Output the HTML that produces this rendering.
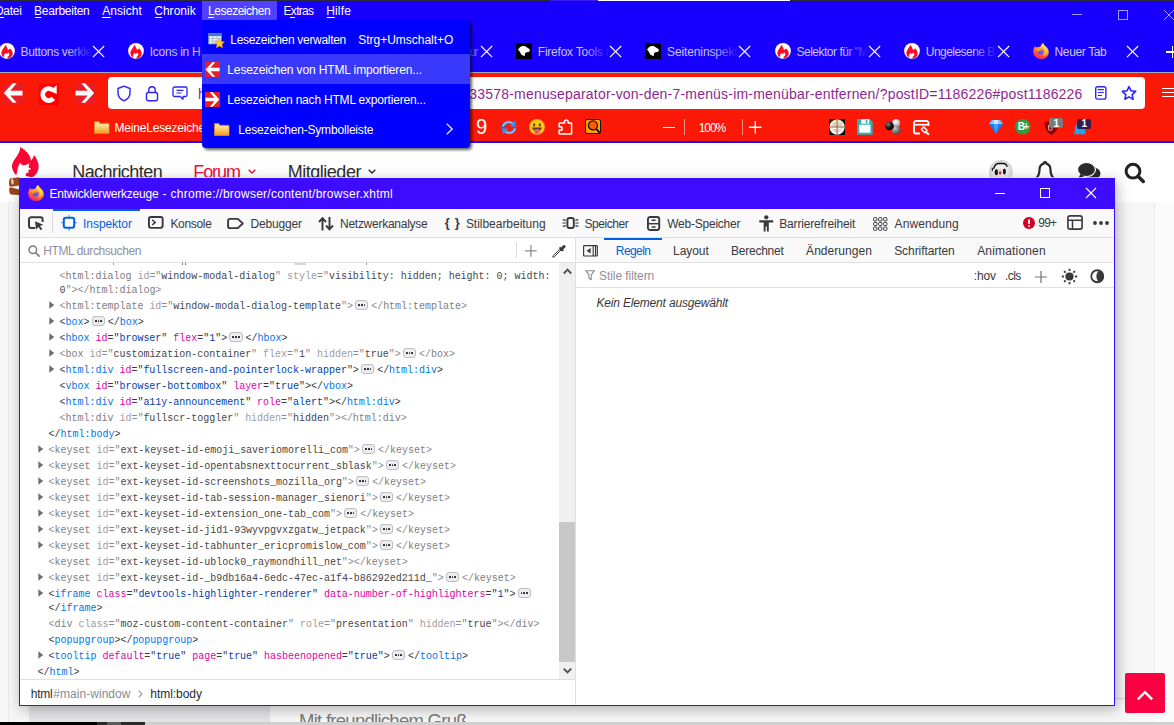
<!DOCTYPE html><html><head><meta charset="utf-8"><title>Entwicklerwerkzeuge</title><style>
html,body{margin:0;padding:0}body{width:1174px;height:725px;overflow:hidden;position:relative;background:#fff;font-family:"Liberation Sans", sans-serif;}
.L{position:absolute;left:0;top:0;width:1174px;height:725px;overflow:hidden}
.L div,.L span,.L svg{position:absolute}
.L span{white-space:pre;line-height:16px;font-size:12px}
.L svg{overflow:visible}
.L span.m{font-family:"Liberation Mono", monospace;font-size:10px;letter-spacing:-0.015px}
.L span.f{font-family:"Liberation Serif", serif}
</style></head><body>
<div class="L">
<div style="left:0px;top:143px;width:1174px;height:59px;background:#fff;"></div>
<div style="left:0px;top:202px;width:1174px;height:523px;background:#f6f6f6;"></div>
<div style="left:0px;top:202px;width:8px;height:523px;background:#f7f7f7;"></div>
<div style="left:8px;top:202px;width:1px;height:523px;background:#e9e9e9;"></div>
<div style="left:1155px;top:202px;width:19px;height:523px;background:#fbfbfb;"></div>
<div style="left:1154px;top:202px;width:1px;height:523px;background:#ececec;"></div>
<div style="left:29px;top:705px;width:240.5px;height:17px;background:#e4e4e7;"></div>
<div style="left:269.5px;top:705px;width:885.5px;height:17px;background:#f7f7f7;"></div>
<svg style="left:11.6px;top:146.7px;" width="27" height="31" viewBox="0 0 27 31"><path d="M8.300 0C11 1.500 15.500 5 17.400 8.700c.9 1.800 1.400 3.300 1.600 5 1.300-1.200 2.400-3.200 2.900-5.400 2.100 2 3.100 4.200 3.700 6.200.9 2.500 1.200 4.300 1 5.800-.3 2.700-1 4.500-1.800 5.700-1 1.500-2.200 2.700-3.300 3.400-2 .9-4 .6-5.800-.2L4.100 28.100C2.500 26.500 1.600 25.200.8 23 0 21-.2 19.800 0 18.600.5 16 1.500 14 2.900 12 4.500 9.500 6 7.500 7 5.400 7.800 3.500 8.300 1.800 8.300 0z" fill="#fa0535"/><path d="M3.800 31L5.400 22.800C6 20 7 17.500 7.900 15.700L10.300 18.200 14 18l3.400-1.700-.9 4 2.700 1.800-3.100 1.200.9 2.100-2.500.4L13 31z" fill="#fff"/></svg>
<svg style="left:8px;top:176px;" width="14" height="20" viewBox="0 0 14 20"><path d="M2 2.500L11 1.200V9.500L3 10.800C1.500 11 .8 9 1 7 1.200 4.500 1.500 2.800 2 2.500z" fill="#a04a1c"/><ellipse cx="4.400" cy="5.700" rx="1.200" ry="2.900" transform="rotate(-6 4.400 5.700)" fill="#f3ddd0"/><path d="M1.200 12.500c.3-.9 1.300-1.200 2.300-1L11 13.500V19L3 18.600C1.500 18 1 15 1.200 12.500z" fill="#9a4418"/></svg>
<span style="left:72.2px;top:164.36px;font-size:18px;color:#2f2f2f;letter-spacing:-0.555px;">Nachrichten</span>
<span style="left:193.3px;top:164.36px;font-size:18px;color:#e8103c;letter-spacing:-1.104px;">Forum</span>
<svg style="left:248px;top:168.5px;" width="8" height="5" viewBox="0 0 8 5"><path d="M.7.7L4 4 7.300.7" stroke="#e8103c" stroke-width="1.400" fill="none"/></svg>
<span style="left:287.8px;top:164.36px;font-size:18px;color:#2f2f2f;letter-spacing:-0.492px;">Mitglieder</span>
<svg style="left:368px;top:168.5px;" width="8" height="5" viewBox="0 0 8 5"><path d="M.7.7L4 4 7.300.7" stroke="#2f2f2f" stroke-width="1.400" fill="none"/></svg>
<svg style="left:989.2px;top:159.8px;" width="23.6" height="23.6" viewBox="0 0 23.6 23.6"><defs><radialGradient id="av" cx=".5" cy=".5" r=".5"><stop offset="0" stop-color="#fbfbfb"/><stop offset=".6" stop-color="#ececec"/><stop offset="1" stop-color="#cfcfcf"/></radialGradient></defs><circle cx="11.800" cy="11.800" r="11.800" fill="url(#av)"/><path d="M4.700 8.800C5.500 5.500 7.500 3.600 9.500 3.500h4.500c2.200.1 3.800 1.300 4.200 3.300" stroke="#111" stroke-width="1.300" fill="none"/><ellipse cx="3.400" cy="9.300" rx=".7" ry="1.900" fill="#222"/><ellipse cx="7.400" cy="12.300" rx="1.700" ry="3" fill="#151515"/><ellipse cx="15.400" cy="11.500" rx="1.500" ry="2.900" fill="#151515"/><ellipse cx="11.300" cy="11.300" rx="2.600" ry="2.900" fill="#eadbd2"/><ellipse cx="11.100" cy="13" rx="1.100" ry="1.800" fill="#b82030"/><rect x="8" y="16" width="7" height="7" fill="#efe6df" opacity=".8"/></svg>
<svg style="left:1034px;top:160px;" width="22" height="24" viewBox="0 0 22 24"><path d="M11 2.200a1.400 1.400 0 0 1 1.400 1.400c2.900.8 4.100 3.200 4.100 6.200 0 5 1.500 7 3.500 9v1.500H2V18.800c2-2 3.500-4 3.500-9 0-3 1.200-5.400 4.100-6.200A1.400 1.400 0 0 1 11 2.200z" stroke="#2b2b2b" stroke-width="2.200" fill="none"/></svg>
<svg style="left:1076px;top:161px;" width="26" height="22" viewBox="0 0 26 22"><ellipse cx="16.500" cy="12.500" rx="8" ry="6.300" fill="#2b2b2b"/><path d="M20 17l4 3.500-6.500-2z" fill="#2b2b2b"/><ellipse cx="10.500" cy="8.500" rx="9" ry="7" fill="#2b2b2b" stroke="#fff" stroke-width="1.200"/><path d="M4.500 13L2 18l6.500-3z" fill="#2b2b2b"/></svg>
<svg style="left:1121.5px;top:161.3px;" width="24" height="24" viewBox="0 0 24 24"><circle cx="11" cy="10.200" r="6.900" stroke="#222" stroke-width="3" fill="none"/><path d="M16 15.200l5.300 5.300" stroke="#222" stroke-width="3.400" stroke-linecap="round"/></svg>
<span style="left:299px;top:712.89px;font-size:18.5px;color:#7a7a7a;letter-spacing:-0.720px;">Mit freundlichem Gruß</span>
<div style="left:1125px;top:673px;width:40px;height:40px;background:#fa0040;border-radius:2px;"></div>
<svg style="left:1136px;top:689.5px;" width="18" height="10.5" viewBox="0 0 18 10.5"><path d="M1.800 9.300L9 2.100 16.200 9.300" stroke="#fff" stroke-width="2.400" fill="none"/></svg>
<div style="left:1115px;top:698px;width:10px;height:1px;background:#d6d6d6;"></div>
</div>
<div class="L">
<div style="left:0px;top:0px;width:1174px;height:72px;background:#1800ff;"></div>
<div style="left:0px;top:0px;width:1174px;height:1px;background:#2b2b38;"></div>
<div style="left:550px;top:0px;width:48px;height:1px;background:#3a1cf0;"></div>
<div style="left:598px;top:0px;width:192px;height:1px;background:#ffffff;"></div>
<div style="left:0px;top:72px;width:1174px;height:1px;background:#a9a4b4;"></div>
<div style="left:0px;top:73px;width:1174px;height:68px;background:#fc1806;"></div>
<div style="left:0px;top:141px;width:1174px;height:2px;background:#1800ff;"></div>
<div style="left:108px;top:77px;width:1037px;height:32px;background:#fff;border-radius:4px;"></div>
<span style="left:-5px;top:3.04px;font-size:12px;color:#fff;letter-spacing:-0.304px;">Datei</span>
<span style="left:34.1px;top:3.04px;font-size:12px;color:#fff;letter-spacing:-0.261px;">Bearbeiten</span>
<span style="left:102.2px;top:3.04px;font-size:12px;color:#fff;letter-spacing:0.057px;">Ansicht</span>
<span style="left:154.2px;top:3.04px;font-size:12px;color:#fff;letter-spacing:0.040px;">Chronik</span>
<span style="left:283.6px;top:3.04px;font-size:12px;color:#fff;letter-spacing:-0.723px;">Extras</span>
<span style="left:326.2px;top:3.04px;font-size:12px;color:#fff;letter-spacing:0.171px;">Hilfe</span>
<div style="left:-4px;top:17px;width:8px;height:1px;background:#fff;"></div>
<div style="left:34.5px;top:17px;width:6.5px;height:1px;background:#fff;"></div>
<div style="left:102px;top:17px;width:8.5px;height:1px;background:#fff;"></div>
<div style="left:154.5px;top:17px;width:7.5px;height:1px;background:#fff;"></div>
<div style="left:289.5px;top:17px;width:5.5px;height:1px;background:#fff;"></div>
<div style="left:326.5px;top:17px;width:8px;height:1px;background:#fff;"></div>
<div style="left:1072px;top:14px;width:10px;height:1px;background:#a79dff;"></div>
<div style="left:1118px;top:10px;width:10px;height:10px;background:transparent;border:1px solid #a79dff;box-sizing:border-box;"></div>
<svg style="left:1164px;top:10px;" width="10" height="10" viewBox="0 0 10 10"><path d="M0 0L10 10M10 0L0 10" stroke="#a79dff" stroke-width="1" fill="none"/></svg>
<svg style="left:-1.3px;top:43px;" width="16" height="16" viewBox="0 0 16 16"><circle cx="8" cy="7.900" r="7.900" fill="#fff"/><path d="M6.200 2C7.700 3.300 8.700 5 8.800 7c.9-.3 1.800-.9 2.500-1.500 1.800 1.800 2.700 4 2.300 6.100-.4 1.800-1.700 3-3.400 3.500l-1.400.3L4.800 14.500C3.100 13.200 2.200 11.400 2.400 9.500 2.700 6.600 5.500 5 6.200 2z" fill="#ff0a22"/><path d="M4.900 14.700c-.2-2 .5-3.800 2-4.600l.7.800 1-.5.400-1 1.200.7-.4 1 .8.600-.8.700.2.700-1.200.3-.5 2.100c-1.200.2-2.400-.1-3.400-.8z" fill="#fff"/></svg>
<span style="left:20.5px;top:44.04px;font-size:12px;color:#c9c3ff;letter-spacing:-0.334px;">Buttons verkle</span>
<div style="left:66.7px;top:42px;width:26px;height:20px;background:linear-gradient(to right,rgba(24,0,255,0),#1800ff);"></div>
<svg style="left:92.80000000000001px;top:46.199999999999996px;" width="11.2" height="11.2" viewBox="0 0 11.2 11.2"><path d="M0 0L11.2 11.2M11.2 0L0 11.2" stroke="#fff" stroke-width="1.15" fill="none"/></svg>
<svg style="left:128px;top:43px;" width="16" height="16" viewBox="0 0 16 16"><circle cx="8" cy="7.900" r="7.900" fill="#fff"/><path d="M6.200 2C7.700 3.300 8.700 5 8.800 7c.9-.3 1.800-.9 2.500-1.500 1.800 1.800 2.700 4 2.300 6.100-.4 1.800-1.700 3-3.400 3.500l-1.400.3L4.800 14.500C3.100 13.200 2.200 11.400 2.400 9.500 2.700 6.600 5.500 5 6.200 2z" fill="#ff0a22"/><path d="M4.900 14.700c-.2-2 .5-3.800 2-4.600l.7.800 1-.5.400-1 1.200.7-.4 1 .8.600-.8.700.2.700-1.200.3-.5 2.100c-1.200.2-2.400-.1-3.400-.8z" fill="#fff"/></svg>
<span style="left:149.8px;top:44.04px;font-size:12px;color:#c9c3ff;letter-spacing:-0.267px;">Icons in H</span>
<div style="left:196px;top:42px;width:26px;height:20px;background:linear-gradient(to right,rgba(24,0,255,0),#1800ff);"></div>
<svg style="left:222.1px;top:46.199999999999996px;" width="11.2" height="11.2" viewBox="0 0 11.2 11.2"><path d="M0 0L11.2 11.2M11.2 0L0 11.2" stroke="#fff" stroke-width="1.15" fill="none"/></svg>
<svg style="left:351.4px;top:46.199999999999996px;" width="11.2" height="11.2" viewBox="0 0 11.2 11.2"><path d="M0 0L11.2 11.2M11.2 0L0 11.2" stroke="#fff" stroke-width="1.15" fill="none"/></svg>
<svg style="left:480.79999999999995px;top:46.199999999999996px;" width="11.2" height="11.2" viewBox="0 0 11.2 11.2"><path d="M0 0L11.2 11.2M11.2 0L0 11.2" stroke="#fff" stroke-width="1.15" fill="none"/></svg>
<svg style="left:516px;top:43px;" width="16" height="16" viewBox="0 0 16 16"><rect width="16" height="16" fill="#000"/><path d="M2 6.600L3.900 4.300C5.400 3 7.500 2.700 9.500 3.500l3.500 2.200c.8.500 1 1.400.8 2.200l-1.200 1.100-2.100.2-1.500 1-.2 2.800-1.300-.2-2.300-1.300L4 9z" fill="#fff"/></svg>
<span style="left:537.8px;top:44.04px;font-size:12px;color:#c9c3ff;letter-spacing:-0.227px;">Firefox Tools f</span>
<div style="left:584px;top:42px;width:26px;height:20px;background:linear-gradient(to right,rgba(24,0,255,0),#1800ff);"></div>
<svg style="left:610.1px;top:46.199999999999996px;" width="11.2" height="11.2" viewBox="0 0 11.2 11.2"><path d="M0 0L11.2 11.2M11.2 0L0 11.2" stroke="#fff" stroke-width="1.15" fill="none"/></svg>
<svg style="left:645.3px;top:43px;" width="16" height="16" viewBox="0 0 16 16"><rect width="16" height="16" fill="#000"/><path d="M2 6.600L3.900 4.300C5.400 3 7.500 2.700 9.500 3.500l3.500 2.200c.8.500 1 1.400.8 2.200l-1.200 1.100-2.100.2-1.500 1-.2 2.800-1.300-.2-2.300-1.300L4 9z" fill="#fff"/></svg>
<span style="left:667.0999999999999px;top:44.04px;font-size:12px;color:#c9c3ff;letter-spacing:-0.129px;">Seiteninspekt</span>
<div style="left:713.3px;top:42px;width:26px;height:20px;background:linear-gradient(to right,rgba(24,0,255,0),#1800ff);"></div>
<svg style="left:739.4px;top:46.199999999999996px;" width="11.2" height="11.2" viewBox="0 0 11.2 11.2"><path d="M0 0L11.2 11.2M11.2 0L0 11.2" stroke="#fff" stroke-width="1.15" fill="none"/></svg>
<svg style="left:774.7px;top:43px;" width="16" height="16" viewBox="0 0 16 16"><circle cx="8" cy="7.900" r="7.900" fill="#fff"/><path d="M6.200 2C7.700 3.300 8.700 5 8.800 7c.9-.3 1.800-.9 2.500-1.500 1.800 1.800 2.700 4 2.300 6.100-.4 1.800-1.700 3-3.400 3.500l-1.400.3L4.800 14.500C3.100 13.200 2.200 11.400 2.400 9.500 2.700 6.600 5.500 5 6.200 2z" fill="#ff0a22"/><path d="M4.900 14.700c-.2-2 .5-3.800 2-4.600l.7.800 1-.5.400-1 1.200.7-.4 1 .8.600-.8.700.2.700-1.200.3-.5 2.100c-1.200.2-2.400-.1-3.400-.8z" fill="#fff"/></svg>
<span style="left:796.5px;top:44.04px;font-size:12px;color:#c9c3ff;letter-spacing:-0.497px;">Selektor für "M</span>
<div style="left:842.7px;top:42px;width:26px;height:20px;background:linear-gradient(to right,rgba(24,0,255,0),#1800ff);"></div>
<svg style="left:868.8000000000001px;top:46.199999999999996px;" width="11.2" height="11.2" viewBox="0 0 11.2 11.2"><path d="M0 0L11.2 11.2M11.2 0L0 11.2" stroke="#fff" stroke-width="1.15" fill="none"/></svg>
<svg style="left:904px;top:43px;" width="16" height="16" viewBox="0 0 16 16"><circle cx="8" cy="7.900" r="7.900" fill="#fff"/><path d="M6.200 2C7.700 3.300 8.700 5 8.800 7c.9-.3 1.800-.9 2.500-1.500 1.800 1.800 2.700 4 2.300 6.100-.4 1.800-1.700 3-3.400 3.500l-1.400.3L4.800 14.500C3.100 13.200 2.200 11.400 2.400 9.500 2.700 6.600 5.500 5 6.200 2z" fill="#ff0a22"/><path d="M4.900 14.700c-.2-2 .5-3.800 2-4.600l.7.800 1-.5.400-1 1.200.7-.4 1 .8.600-.8.700.2.700-1.200.3-.5 2.100c-1.200.2-2.400-.1-3.400-.8z" fill="#fff"/></svg>
<span style="left:925.8px;top:44.04px;font-size:12px;color:#c9c3ff;letter-spacing:-0.536px;">Ungelesene B</span>
<div style="left:972px;top:42px;width:26px;height:20px;background:linear-gradient(to right,rgba(24,0,255,0),#1800ff);"></div>
<svg style="left:998.1px;top:46.199999999999996px;" width="11.2" height="11.2" viewBox="0 0 11.2 11.2"><path d="M0 0L11.2 11.2M11.2 0L0 11.2" stroke="#fff" stroke-width="1.15" fill="none"/></svg>
<svg style="left:1033.3px;top:43px;" width="16" height="16" viewBox="0 0 16 16"><defs><linearGradient id="fxg" x1=".75" y1=".05" x2=".3" y2="1"><stop offset="0" stop-color="#fff44f"/><stop offset=".3" stop-color="#ffb92e"/><stop offset=".6" stop-color="#ff6b2b"/><stop offset=".85" stop-color="#ff3647"/><stop offset="1" stop-color="#f0207a"/></linearGradient><radialGradient id="fxgb" cx=".4" cy=".6" r=".7"><stop offset="0" stop-color="#4f5ae8"/><stop offset="1" stop-color="#9a4dff"/></radialGradient></defs><path d="M8 16C3.600 16 .2 12.700.2 8.500c0-1.900.7-3.800 1.900-5.100l.4-.5c.1.700.4 1.300.8 1.700.7-.6 1.900-.8 2.900-.6.600-.1 1.300-.4 1.700-1C8.100 1.700 9.100.6 10.200 0c.3 1.200 1.300 2.200 2.400 3.200 1.900 1.600 3.200 3.600 3.200 6 0 3.800-3.300 6.800-7.800 6.800z" fill="url(#fxg)"/><circle cx="7.500" cy="8.800" r="3" fill="url(#fxgb)"/><path d="M2.300 5.400c1.400-.6 3.400-.4 4.400.4l3 .4c-.6 1-1.600 1.500-2.600 1.500s-1.600.5-2.100 1.300c-.5-1.600-1.500-2.700-2.700-3.600z" fill="#ff9a1f"/><path d="M9.600 3.700c1.400 1.300 2.300 3.100 2.300 5.300 0 1.700-.8 3.200-2 4.200 2.600-.6 4.400-2.600 4.400-5.200 0-1.900-1-3.500-2.400-4.700-.8-.7-1.500-1.400-1.800-2.200-.5.700-.7 1.600-.5 2.600z" fill="#ffdf45" opacity=".75"/></svg>
<span style="left:1054.5px;top:44.04px;font-size:12px;color:#cdc8ff;letter-spacing:-0.357px;">Neuer Tab</span>
<svg style="left:1127.4px;top:46.199999999999996px;" width="11.2" height="11.2" viewBox="0 0 11.2 11.2"><path d="M0 0L11.2 11.2M11.2 0L0 11.2" stroke="#fff" stroke-width="1.15" fill="none"/></svg>
<div style="left:1171.7px;top:45.8px;width:1.2px;height:12.4px;background:#fff;"></div>
<div style="left:1166.3px;top:51.4px;width:12px;height:1.2px;background:#fff;"></div>
<span style="left:469.5px;top:44.04px;font-size:12px;color:#6a5cff;letter-spacing:-1.772px;">ur</span>
<div style="left:3px;top:83px;width:20px;height:20px;background:#e81d26;"></div>
<svg style="left:3px;top:83px;" width="20" height="20" viewBox="0 0 20 20"><path d="M.8 10L9.800.3h3.900L7.300 7.700H19.500v4.700H7.300l6.400 7.300H9.800z" fill="#fff"/></svg>
<div style="left:39px;top:84px;width:20px;height:20.5px;background:#fe0000;"></div>
<svg style="left:39px;top:84px;" width="20" height="20.5" viewBox="0 0 20 20.5"><path d="M13.400 5.900A5.950 5.950 0 1 0 14.300 14.400" stroke="#fff" stroke-width="4.800" fill="none"/><path d="M17.700 1L17.700 9.900 11 7z" fill="#fff"/></svg>
<div style="left:75px;top:83px;width:20px;height:20px;background:#e81d26;"></div>
<svg style="left:75px;top:83px;" width="20" height="20" viewBox="0 0 20 20"><path d="M19.200 10L10.200.3H6.300l6.400 7.400H.5v4.700h12.200l-6.400 7.300h3.900z" fill="#fff"/></svg>
<svg style="left:116.2px;top:84.7px;" width="16" height="17" viewBox="0 0 16 17"><path d="M8 1.200L14 3.500V8c0 3.600-2.500 6.300-6 7.800C4.500 14.300 2 11.600 2 8V3.500z" stroke="#2a22ff" stroke-width="1.400" fill="none" stroke-linejoin="round"/></svg>
<svg style="left:145.2px;top:84.5px;" width="14" height="17" viewBox="0 0 14 17"><rect x="1.500" y="7.500" width="11" height="8.300" rx="1.800" stroke="#2a22ff" stroke-width="1.400" fill="none"/><path d="M3.800 7.500V5a3.200 3.200 0 0 1 6.400 0v2.500" stroke="#2a22ff" stroke-width="1.400" fill="none"/></svg>
<svg style="left:172px;top:86px;" width="16" height="14" viewBox="0 0 16 14"><path d="M2.500 1h11a1.500 1.500 0 0 1 1.500 1.500v6.500a1.500 1.500 0 0 1-1.500 1.500h-2.500v2.800l-3-2.800h-5.500a1.500 1.500 0 0 1-1.500-1.500v-6.500a1.500 1.500 0 0 1 1.500-1.500z" stroke="#2a22ff" stroke-width="1.300" fill="none" stroke-linejoin="round"/><path d="M4.500 4.300h7M4.500 7h5" stroke="#2a22ff" stroke-width="1.200"/></svg>
<span style="left:198px;top:86.15px;font-size:14px;color:#8e2890;">h</span>
<span style="left:469.3px;top:86.15px;font-size:14px;color:#8e2890;letter-spacing:0.196px;">33578-menuseparator-von-den-7-menüs-im-menübar-entfernen/?postID=1186226#post1186226</span>
<svg style="left:1095.3px;top:86px;" width="12" height="14" viewBox="0 0 12 14"><rect x=".7" y=".7" width="10.200" height="12.400" rx="1.900" stroke="#2a22ff" stroke-width="1.400" fill="none"/><path d="M3.200 3.700h5.200M3.200 6.500h5.200M3.200 9.500h3.300" stroke="#2a22ff" stroke-width="1.200" stroke-linecap="round"/></svg>
<svg style="left:1121px;top:85.3px;" width="16" height="16" viewBox="0 0 16 16"><path d="M8 1.500l2 4.300 4.700.6-3.500 3.200.9 4.600L8 11.900l-4.100 2.300.9-4.600L1.300 6.400 6 5.800z" stroke="#2a22ff" stroke-width="1.600" fill="none" stroke-linejoin="round"/></svg>
<div style="left:1162px;top:87.8px;width:14px;height:1.2px;background:#fff;"></div>
<div style="left:1162px;top:91.9px;width:14px;height:1.2px;background:#fff;"></div>
<div style="left:1162px;top:96px;width:14px;height:1.2px;background:#fff;"></div>
<svg style="left:94.3px;top:121px;" width="15.5" height="13" viewBox="0 0 15.5 13"><defs><linearGradient id="fg1" x1="0" y1="0" x2="0" y2="1"><stop offset="0" stop-color="#ffe29a"/><stop offset="1" stop-color="#f59c1d"/></linearGradient></defs><path d="M.5.500h4.300l1 1.800h9.200v10.200h-14.500z" fill="#ffd98a" stroke="#c9801c" stroke-width=".9"/><rect x=".9" y="3.600" width="13.700" height="8.500" fill="url(#fg1)"/></svg>
<span style="left:114.5px;top:119.54px;font-size:12px;color:#fff;letter-spacing:-0.200px;">MeineLesezeiche</span>
<span style="left:475.5px;top:118.55px;font-size:21.5px;color:#fff;transform:scaleX(.94);transform-origin:0 0;">9</span>
<svg style="left:501px;top:119.5px;" width="16" height="15" viewBox="0 0 16 15"><path d="M.6 7.200C.8 3.400 4 .8 7.800.8c1.800 0 3.300.6 4.500 1.600L14.200.6l.8 6.300-6.300-.6 1.900-1.800C9.800 4 8.900 3.700 7.800 3.700c-2.200 0-3.700 1.300-4.200 3.100z" fill="#2f8ff2"/><path d="M15.400 7.800c-.2 3.800-3.400 6.400-7.200 6.400-1.800 0-3.300-.6-4.500-1.600L1.800 14.400 1 8.100l6.300.6-1.900 1.800c.8.500 1.700.8 2.800.8 2.200 0 3.700-1.300 4.200-3.100z" fill="#2f8ff2"/><path d="M2 6.300C2.800 3.600 5.200 2 7.800 2c1.500 0 2.900.5 3.900 1.400" stroke="#a9d8ff" stroke-width="1.100" fill="none"/><path d="M14 8.700c-.8 2.700-3.200 4.300-5.800 4.300-1.500 0-2.900-.5-3.900-1.400" stroke="#a9d8ff" stroke-width="1.100" fill="none"/></svg>
<svg style="left:529px;top:119px;" width="16" height="16" viewBox="0 0 16 16"><circle cx="8" cy="8" r="7.900" fill="#fcc21b"/><ellipse cx="5.200" cy="5.900" rx="1.100" ry="1.600" fill="#5a4425"/><ellipse cx="10.800" cy="5.900" rx="1.100" ry="1.600" fill="#5a4425"/><path d="M3.200 8.600h9.600c-.2 2.300-2.100 3.900-4.800 3.900s-4.600-1.600-4.800-3.900z" fill="#5a3a20"/><path d="M5.700 10h4.600v3.200a2.300 2.300 0 0 1-4.600 0z" fill="#f0527a"/></svg>
<svg style="left:558.3px;top:119.2px;" width="14.5" height="16" viewBox="0 0 14.5 16"><path d="M6.500 3.900V2.700a1.800 1.800 0 0 1 3.600 0v1.200h2.700a.8.800 0 0 1 .8.800v9.500a.8.800 0 0 1-.8.800H1.900a.8.800 0 0 1-.8-.8v-2.900h1.300a1.800 1.800 0 0 0 0-3.600H1.100V4.700a.8.800 0 0 1 .8-.8z" stroke="#fff" stroke-width="1.500" fill="none" stroke-linejoin="round"/></svg>
<div style="left:585.3px;top:119.4px;width:15.4px;height:15px;background:#ffa200;border:1.300px solid #1a1200;border-radius:2px;box-sizing:border-box;"></div>
<svg style="left:585.3px;top:119.4px;" width="15.4" height="15" viewBox="0 0 15.4 15"><circle cx="7.900" cy="6.400" r="4.500" fill="#ff5a00" stroke="#1a1200" stroke-width="1.300"/><path d="M11.200 9.800l3.800 4.300" stroke="#1a1200" stroke-width="1.900"/></svg>
<div style="left:663px;top:127px;width:12px;height:1.2px;background:#fff;"></div>
<div style="left:683.5px;top:119px;width:1px;height:16px;background:#ff8f84;"></div>
<span style="left:698.8px;top:119.54px;font-size:12px;color:#fff;letter-spacing:-1.101px;">100%</span>
<div style="left:741.5px;top:119px;width:1px;height:16px;background:#ff8f84;"></div>
<svg style="left:749px;top:121.3px;" width="12.5" height="12.5" viewBox="0 0 12.5 12.5"><path d="M6.250 0V12.500M0 6.250H12.500" stroke="#fff" stroke-width="1.300" fill="none"/></svg>
<div style="left:829px;top:119px;width:16.2px;height:16px;background:#000;"></div>
<svg style="left:829px;top:119px;" width="16.2" height="16" viewBox="0 0 16.2 16"><defs><linearGradient id="chg" x1="0" y1="0" x2="0" y2="1"><stop offset="0" stop-color="#d9de8c"/><stop offset=".3" stop-color="#f3efdf"/><stop offset="1" stop-color="#f8f2ef"/></linearGradient></defs><circle cx="8.100" cy="8" r="7.700" fill="url(#chg)"/><path d="M8.100 .5V15.500M.5 8H15.700" stroke="#7a2a1a" stroke-width=".7" fill="none"/><path d="M3.500 4.800h9.200M3.500 6.400h9.200M4 11h8.200M6 12.800h4.200" stroke="#a08070" stroke-width=".5" fill="none"/></svg>
<svg style="left:857.2px;top:119.2px;" width="15.7" height="15.7" viewBox="0 0 15.7 15.7"><path d="M0 0h12.700l3 3V15.700H0z" fill="#2cb1b4"/><rect x="2.300" y="5.700" width="11.100" height="8" fill="#fff"/><rect x="4.300" y=".3" width="8" height="4.300" fill="#fff"/><rect x="8.800" y="1" width="1.600" height="3" fill="#2cb1b4"/></svg>
<svg style="left:885px;top:119px;" width="17" height="16.5" viewBox="0 0 17 16.5"><defs><radialGradient id="b1" cx=".35" cy=".3" r=".7"><stop offset="0" stop-color="#888"/><stop offset=".5" stop-color="#222"/><stop offset="1" stop-color="#000"/></radialGradient><radialGradient id="b2" cx=".4" cy=".35" r=".7"><stop offset="0" stop-color="#fff"/><stop offset="1" stop-color="#a5a5a5"/></radialGradient><radialGradient id="b3" cx=".35" cy=".3" r=".7"><stop offset="0" stop-color="#c8c8c8"/><stop offset="1" stop-color="#4a4a4a"/></radialGradient></defs><circle cx="11.100" cy="4" r="3.900" fill="url(#b2)"/><circle cx="11.200" cy="11" r="4.600" fill="url(#b3)"/><circle cx="4.500" cy="7" r="4.300" fill="url(#b1)"/></svg>
<svg style="left:912.5px;top:119.5px;" width="17.5" height="16" viewBox="0 0 17.5 16"><path d="M15.500 6V3a2 2 0 0 0-2-2H3a2 2 0 0 0-2 2v8.500a2 2 0 0 0 2 2h4" stroke="#fff" stroke-width="1.900" fill="none"/><path d="M1 4.700h14.500" stroke="#fff" stroke-width="1.700"/><path d="M8.300 9.300l2.400-2.400 3.400 3.400-2.400 2.400z" stroke="#fff" stroke-width="1.500" fill="none" stroke-linejoin="round"/><path d="M13 12l3 2.800" stroke="#fff" stroke-width="2.200"/></svg>
<svg style="left:988.5px;top:120px;" width="14" height="14" viewBox="0 0 14 14"><path d="M3 0h8l3 4-7 10L0 4z" fill="#1e78e6"/><path d="M3 0h8l3 4H0z" fill="#7cc4ff"/><path d="M4.500 4h5L7 14z" fill="#3da0ff"/><path d="M5 0h4l.5 4h-5z" fill="#c8e8ff"/></svg>
<svg style="left:1015.3px;top:119.3px;" width="15.5" height="15.5" viewBox="0 0 15.5 15.5"><circle cx="7.750" cy="7.750" r="7.750" fill="#2e9e44"/></svg>
<span style="left:1017.8px;top:119.13px;font-size:10px;color:#fff;letter-spacing:-1.862px;font-weight:700;">B+</span>
<svg style="left:1044px;top:120px;" width="15" height="15" viewBox="0 0 15 15"><path d="M7.500 0C9.500 1.300 12 2 14.500 2c0 6-2 10.500-7 13C2.500 12.500.5 8 .5 2 3 2 5.500 1.300 7.500 0z" fill="#8a0606"/><path d="M4.500 5v3.500a1.800 1.800 0 0 0 3.600 0V5" stroke="#d8a0a0" stroke-width="1.100" fill="none"/></svg>
<div style="left:1049px;top:118.2px;width:13.9px;height:10px;background:#7a7a7a;border-radius:2px;"></div>
<span style="left:1053.5px;top:115.73px;font-size:10px;color:#fff;font-weight:700;">1</span>
<svg style="left:1073px;top:120.5px;" width="14" height="14" viewBox="0 0 14 14"><path d="M1 14c.5-2 1-4 1-7a5 5 0 0 1 10 0c0 3 .5 5 1 7l-2.200-1.500L9.500 14 7 12.500 4.500 14 3.200 12.500z" fill="#1ea5f2"/></svg>
<div style="left:1076.8px;top:118.5px;width:14.1px;height:10px;background:#3a1a4d;border-radius:2px;"></div>
<span style="left:1081.5px;top:115.83px;font-size:10px;color:#fff;font-weight:700;">1</span>
</div>
<div class="L">
<div style="left:19px;top:178px;width:1096px;height:528px;background:#fff;box-shadow:2px 3px 13px rgba(0,0,0,.3);"></div>
<div style="left:19px;top:177px;width:1096px;height:1px;background:#ebebda;opacity:.7;"></div>
<div style="left:19px;top:178px;width:1096px;height:31px;background:#3d0cff;"></div>
<div style="left:19px;top:209px;width:1px;height:497px;background:#3d0cff;"></div>
<div style="left:1114px;top:209px;width:1px;height:497px;background:#3d0cff;"></div>
<div style="left:19px;top:705px;width:1096px;height:1px;background:#3d0cff;"></div>
<div style="left:20px;top:209px;width:1094px;height:28px;background:#f9f9fa;"></div>
<div style="left:576px;top:238px;width:538px;height:24px;background:#f9f9fa;"></div>
<div style="left:20px;top:237px;width:1094px;height:1px;background:#e0e0e2;"></div>
<div style="left:20px;top:262px;width:1094px;height:1px;background:#e0e0e2;"></div>
<div style="left:575px;top:238px;width:1px;height:467px;background:#e0e0e2;"></div>
<div style="left:576px;top:287px;width:538px;height:1px;background:#e0e0e2;"></div>
<div style="left:20px;top:679px;width:555px;height:1px;background:#e0e0e2;"></div>
<div style="left:559px;top:263px;width:16px;height:416px;background:#f0f0f0;"></div>
<div style="left:559px;top:521.7px;width:16px;height:140px;background:#c8c8c8;"></div>
<svg style="left:28px;top:185px;" width="16" height="16" viewBox="0 0 16 16"><defs><linearGradient id="fyg" x1=".75" y1=".05" x2=".3" y2="1"><stop offset="0" stop-color="#fff44f"/><stop offset=".3" stop-color="#ffb92e"/><stop offset=".6" stop-color="#ff6b2b"/><stop offset=".85" stop-color="#ff3647"/><stop offset="1" stop-color="#f0207a"/></linearGradient><radialGradient id="fygb" cx=".4" cy=".6" r=".7"><stop offset="0" stop-color="#4f5ae8"/><stop offset="1" stop-color="#9a4dff"/></radialGradient></defs><path d="M8 16C3.600 16 .2 12.700.2 8.500c0-1.900.7-3.800 1.900-5.100l.4-.5c.1.700.4 1.300.8 1.700.7-.6 1.900-.8 2.900-.6.600-.1 1.300-.4 1.700-1C8.100 1.700 9.100.6 10.200 0c.3 1.200 1.300 2.200 2.400 3.200 1.900 1.600 3.200 3.600 3.200 6 0 3.800-3.300 6.800-7.800 6.800z" fill="url(#fyg)"/><circle cx="7.500" cy="8.800" r="3" fill="url(#fygb)"/><path d="M2.300 5.400c1.400-.6 3.400-.4 4.400.4l3 .4c-.6 1-1.600 1.500-2.600 1.500s-1.600.5-2.100 1.300c-.5-1.600-1.500-2.700-2.700-3.600z" fill="#ff9a1f"/><path d="M9.600 3.700c1.400 1.300 2.300 3.100 2.300 5.300 0 1.700-.8 3.200-2 4.200 2.600-.6 4.400-2.600 4.400-5.200 0-1.900-1-3.500-2.400-4.700-.8-.7-1.500-1.400-1.800-2.200-.5.700-.7 1.600-.5 2.600z" fill="#ffdf45" opacity=".75"/></svg>
<span style="left:49.4px;top:185.84px;font-size:12px;color:#fff;letter-spacing:-0.190px;">Entwicklerwerkzeuge</span>
<span style="left:162.4px;top:185.84px;font-size:12px;color:#fff;">-</span>
<span style="left:170.6px;top:185.84px;font-size:12px;color:#fff;letter-spacing:0.255px;">chrome://browser/content/browser.xhtml</span>
<div style="left:995.4px;top:193px;width:9.8px;height:1px;background:#fff;"></div>
<div style="left:1040.4px;top:188.4px;width:9.6px;height:9.6px;background:transparent;border:1px solid #fff;box-sizing:border-box;"></div>
<svg style="left:1086px;top:187.8px;" width="10" height="10" viewBox="0 0 10 10"><path d="M0 0L10 10M10 0L0 10" stroke="#fff" stroke-width="1.100" fill="none"/></svg>
<svg style="left:27px;top:215px;" width="18" height="16" viewBox="0 0 18 16"><path d="M8.300 13H4a2 2 0 0 1-2-2V4.300a2 2 0 0 1 2-2h9.600a2 2 0 0 1 2 2V7" stroke="#38383d" stroke-width="2" fill="none"/><path d="M8 6.200l8.200 3.500-3.300 1.300 2.400 3-1.500 1.200-2.400-3.100-2.300 2.400z" fill="#38383d"/></svg>
<div style="left:52px;top:213px;width:1px;height:20px;background:#dcdcdf;"></div>
<div style="left:53px;top:209px;width:87px;height:2px;background:#0060df;"></div>
<svg style="left:61px;top:215px;" width="16" height="16" viewBox="0 0 16 16"><rect x="2.800" y="2.700" width="10.400" height="10" rx="2" stroke="#0060df" stroke-width="2" fill="none"/><path d="M8 .3v1.500M8 13.700v1.700M.3 7.700h1.500M14.200 7.700h1.500" stroke="#0060df" stroke-width="1.300" opacity=".75"/></svg>
<span style="left:83.1px;top:216.24px;font-size:12px;color:#0060df;letter-spacing:-0.070px;">Inspektor</span>
<svg style="left:147.1px;top:215.3px;" width="17.6" height="14.8" viewBox="0 0 17.6 14.8"><rect x="1.950" y="1.950" width="13.700" height="10.900" rx="2" stroke="#38383d" stroke-width="1.900" fill="none"/><path d="M5.200 4.800l3 2.600-3 2.600" stroke="#38383d" stroke-width="1.500" fill="none"/></svg>
<span style="left:170.4px;top:216.24px;font-size:12px;color:#38383d;letter-spacing:-0.312px;">Konsole</span>
<svg style="left:227.3px;top:216.8px;" width="17.5" height="13" viewBox="0 0 17.5 13"><path d="M3 1.900h7.800l5 4.600-5 4.600H3a1.900 1.900 0 0 1-1.900-1.900V3.800A1.900 1.900 0 0 1 3 1.900z" stroke="#38383d" stroke-width="1.900" fill="none" stroke-linejoin="round"/></svg>
<span style="left:250.4px;top:216.24px;font-size:12px;color:#38383d;letter-spacing:-0.174px;">Debugger</span>
<svg style="left:317.5px;top:215.5px;" width="16" height="15.5" viewBox="0 0 16 15.5"><path d="M4.500 14.500V2.500M1 6L4.500 2.200 8 6M11.500 1v12M8 9.500l3.500 3.800L15 9.500" stroke="#38383d" stroke-width="1.900" fill="none"/></svg>
<span style="left:340px;top:216.24px;font-size:12px;color:#38383d;letter-spacing:-0.263px;">Netzwerkanalyse</span>
<span style="left:444.7px;top:215.10px;font-size:13px;color:#38383d;letter-spacing:4.975px;font-weight:700;">{}</span>
<span style="left:465.9px;top:216.24px;font-size:12px;color:#38383d;letter-spacing:-0.026px;">Stilbearbeitung</span>
<svg style="left:561.5px;top:216px;" width="17" height="14.5" viewBox="0 0 17 14.5"><rect x="5.400" y="1.950" width="6.400" height="10.100" rx="2" stroke="#38383d" stroke-width="1.900" fill="none"/><path d="M.8 3.600l3 .8M.5 7h3.300M.8 10.400l3-.8M16.400 3.600l-3 .8M16.700 7h-3.300M16.400 10.400l-3-.8" stroke="#38383d" stroke-width="1.200" fill="none"/></svg>
<span style="left:584.4px;top:216.24px;font-size:12px;color:#38383d;letter-spacing:-0.439px;">Speicher</span>
<svg style="left:645.5px;top:214.5px;" width="15.2" height="17" viewBox="0 0 15.2 17"><rect x="1.950" y="1.950" width="11.300" height="13" rx="2.200" stroke="#38383d" stroke-width="1.900" fill="none"/><path d="M2 8.700h11.200" stroke="#38383d" stroke-width="1.500"/><path d="M5.600 5.300h4M5.600 12h4" stroke="#38383d" stroke-width="1.400"/></svg>
<span style="left:667.2px;top:216.24px;font-size:12px;color:#38383d;letter-spacing:-0.230px;">Web-Speicher</span>
<svg style="left:758.5px;top:214.8px;" width="14.5" height="17" viewBox="0 0 14.5 17"><circle cx="7.250" cy="2.300" r="2.150" fill="#38383d"/><path d="M.3 5.300h13.900v2.100H9.800V16.500H7.900V11.400H6.600V16.500H4.700V7.400H.3z" fill="#38383d"/></svg>
<span style="left:779.3px;top:216.24px;font-size:12px;color:#38383d;letter-spacing:-0.180px;">Barrierefreiheit</span>
<svg style="left:873px;top:216.5px;" width="14.5" height="14" viewBox="0 0 14.5 14"><rect x="0.6" y="0.6" width="3.300" height="3.300" rx=".9" stroke="#38383d" stroke-width="1" fill="none"/><rect x="0.6" y="5.3" width="3.300" height="3.300" rx=".9" stroke="#38383d" stroke-width="1" fill="none"/><rect x="0.6" y="10.0" width="3.300" height="3.300" rx=".9" stroke="#38383d" stroke-width="1" fill="none"/><rect x="5.6" y="0.6" width="3.300" height="3.300" rx=".9" stroke="#38383d" stroke-width="1" fill="none"/><rect x="5.6" y="5.3" width="3.300" height="3.300" rx=".9" stroke="#38383d" stroke-width="1" fill="none"/><rect x="5.6" y="10.0" width="3.300" height="3.300" rx=".9" stroke="#38383d" stroke-width="1" fill="none"/><rect x="10.6" y="0.6" width="3.300" height="3.300" rx=".9" stroke="#38383d" stroke-width="1" fill="none"/><rect x="10.6" y="5.3" width="3.300" height="3.300" rx=".9" stroke="#38383d" stroke-width="1" fill="none"/><rect x="10.6" y="10.0" width="3.300" height="3.300" rx=".9" stroke="#38383d" stroke-width="1" fill="none"/></svg>
<span style="left:894.6px;top:216.24px;font-size:12px;color:#38383d;letter-spacing:0.076px;">Anwendung</span>
<svg style="left:1022.8px;top:217px;" width="12" height="12" viewBox="0 0 12 12"><circle cx="6" cy="6" r="6" fill="#d70022"/><rect x="5.100" y="2.300" width="1.800" height="4.800" rx=".6" fill="#fff"/><circle cx="6" cy="9" r="1" fill="#fff"/></svg>
<span style="left:1038.3px;top:215.04px;font-size:12px;color:#38383d;letter-spacing:-0.830px;">99+</span>
<svg style="left:1066.8px;top:215.3px;" width="16" height="15" viewBox="0 0 16 15"><rect x=".9" y=".9" width="14.200" height="13.200" rx="2.200" stroke="#38383d" stroke-width="1.600" fill="none"/><path d="M.9 5.200h14.200M5.500 5.200v9" stroke="#38383d" stroke-width="1.500"/></svg>
<svg style="left:1093.2px;top:221.3px;" width="4" height="4" viewBox="0 0 4 4"><circle cx="2" cy="2" r="1.900" fill="#38383d"/></svg>
<svg style="left:1099px;top:221.3px;" width="4" height="4" viewBox="0 0 4 4"><circle cx="2" cy="2" r="1.900" fill="#38383d"/></svg>
<svg style="left:1104.8px;top:221.3px;" width="4" height="4" viewBox="0 0 4 4"><circle cx="2" cy="2" r="1.900" fill="#38383d"/></svg>
<svg style="left:28px;top:244.5px;" width="13" height="12" viewBox="0 0 13 12"><circle cx="4.800" cy="4.800" r="3.800" stroke="#7d7d84" stroke-width="1.500" fill="none"/><path d="M7.600 7.600l4 4" stroke="#7d7d84" stroke-width="1.700"/></svg>
<span style="left:43.3px;top:243.44px;font-size:12px;color:#8f8f9d;letter-spacing:-0.412px;">HTML durchsuchen</span>
<div style="left:515.5px;top:242px;width:1px;height:15.5px;background:#dcdcdf;"></div>
<svg style="left:525px;top:245.2px;" width="11.8" height="11.8" viewBox="0 0 11.8 11.8"><path d="M5.900 0V11.800M0 5.900H11.800" stroke="#8a8a8e" stroke-width="1.250" fill="none"/></svg>
<svg style="left:552px;top:244px;" width="14.5" height="14" viewBox="0 0 14.5 14"><path d="M8.300 4.600L1.300 11.600l-.5 1.600 1.600-.5 7-7z" stroke="#38383d" stroke-width="1" fill="#fff" stroke-linejoin="round"/><path d="M7.600 3.300l3.700 3.700" stroke="#38383d" stroke-width="1.700"/><path d="M9.300 5.300l2.800-2.800" stroke="#38383d" stroke-width="3" stroke-linecap="round"/></svg>
<svg style="left:583px;top:245.2px;" width="15" height="11.6" viewBox="0 0 15 11.6"><rect x=".6" y=".6" width="13.700" height="10.400" rx=".8" stroke="#38383d" stroke-width="1.200" fill="none"/><path d="M10.200.6v10.400M12.500.6v10.400" stroke="#38383d" stroke-width="1.100"/><path d="M7.600 3v5.600L3.500 5.800z" fill="#38383d"/></svg>
<div style="left:604px;top:237.5px;width:58px;height:2px;background:#0060df;"></div>
<span style="left:615.8px;top:243.24px;font-size:12px;color:#0060df;letter-spacing:-0.586px;">Regeln</span>
<span style="left:673px;top:243.24px;font-size:12px;color:#38383d;letter-spacing:-0.046px;">Layout</span>
<span style="left:731px;top:243.24px;font-size:12px;color:#38383d;letter-spacing:-0.238px;">Berechnet</span>
<span style="left:806.1px;top:243.24px;font-size:12px;color:#38383d;letter-spacing:0.045px;">Änderungen</span>
<span style="left:894.2px;top:243.24px;font-size:12px;color:#38383d;letter-spacing:-0.069px;">Schriftarten</span>
<span style="left:977.2px;top:243.24px;font-size:12px;color:#38383d;letter-spacing:0.168px;">Animationen</span>
<svg style="left:584.8px;top:270.2px;" width="10.2" height="10.4" viewBox="0 0 10.2 10.4"><path d="M.7.700h8.800L6.200 4.800v5L4 8.300V4.800z" stroke="#8a8a8e" stroke-width="1.100" fill="none" stroke-linejoin="round"/></svg>
<span style="left:599px;top:268.04px;font-size:12px;color:#8f8f9d;letter-spacing:-0.061px;">Stile filtern</span>
<span style="left:973.7px;top:268.04px;font-size:12px;color:#38383d;letter-spacing:-0.129px;">:hov</span>
<span style="left:1005px;top:268.04px;font-size:12px;color:#38383d;letter-spacing:-0.600px;">.cls</span>
<svg style="left:1035px;top:270.5px;" width="12" height="12" viewBox="0 0 12 12"><path d="M6 0V12M0 6H12" stroke="#737378" stroke-width="1.200" fill="none"/></svg>
<svg style="left:1060.5px;top:267.5px;" width="17" height="17" viewBox="0 0 17 17"><circle cx="8.500" cy="8.500" r="4.100" fill="#38383d"/><path d="M8.500 .8v2.100M8.500 14.100v2.100M.8 8.500h2.100M14.100 8.500h2.100M3.100 3.100l1.500 1.500M12.400 12.400l1.500 1.500M13.900 3.100l-1.500 1.500M4.600 12.400l-1.500 1.500" stroke="#38383d" stroke-width="1.800"/></svg>
<svg style="left:1089.65px;top:268.75px;" width="14.5" height="14.5" viewBox="0 0 14.5 14.5"><defs><clipPath id="ccp"><circle cx="7.250" cy="7.250" r="6.600"/></clipPath></defs><circle cx="7.250" cy="7.250" r="6" stroke="#38383d" stroke-width="1.800" fill="none"/><ellipse cx="10.700" cy="7.250" rx="4.300" ry="5.900" fill="#38383d" clip-path="url(#ccp)"/></svg>
<span style="left:596.4px;top:295.04px;font-size:12px;color:#38383d;letter-spacing:-0.165px;font-style:italic;">Kein Element ausgewählt</span>
<svg style="left:563.2px;top:268px;" width="9" height="6.2" viewBox="0 0 9 6.2"><path d="M.8 5.500L4.500 1.700 8.200 5.500" stroke="#505050" stroke-width="1.900" fill="none"/></svg>
<svg style="left:563.2px;top:668.3px;" width="9" height="6.2" viewBox="0 0 9 6.2"><path d="M.8.700L4.500 4.500 8.200.7" stroke="#505050" stroke-width="1.900" fill="none"/></svg>
<span style="left:30.7px;top:685.64px;font-size:12px;color:#2a2a2e;letter-spacing:-0.227px;">html</span>
<span style="left:53.2px;top:685.64px;font-size:12px;color:#8a8a90;letter-spacing:0.054px;">#main-window</span>
<svg style="left:138px;top:689.5px;" width="5" height="8" viewBox="0 0 5 8"><path d="M.7.700L4 4 .7 7.300" stroke="#9a9aa0" stroke-width="1.200" fill="none"/></svg>
<span style="left:150.3px;top:685.64px;font-size:12px;color:#2a2a2e;letter-spacing:-0.041px;">html:body</span>
<span class="m" style="left:59.6px;top:268.53px;font-size:10px;color:#8a8a90;">&lt;</span>
<span class="m" style="left:65.59px;top:268.53px;font-size:10px;color:#7d7d84;">html:dialog</span>
<span class="m" style="left:137.41px;top:268.53px;font-size:10px;color:#9c9ca2;">id</span>
<span class="m" style="left:149.38px;top:268.53px;font-size:10px;color:#8a8a90;">="</span>
<span class="m" style="left:161.35px;top:268.53px;font-size:10px;color:#46464c;">window-modal-dialog</span>
<span class="m" style="left:275.06px;top:268.53px;font-size:10px;color:#8a8a90;">"</span>
<span class="m" style="left:287.03px;top:268.53px;font-size:10px;color:#9c9ca2;">style</span>
<span class="m" style="left:316.96px;top:268.53px;font-size:10px;color:#8a8a90;">="</span>
<span class="m" style="left:328.93px;top:268.53px;font-size:10px;color:#46464c;">visibility: hidden; height: 0; width:</span>
<span class="m" style="left:59.6px;top:282.53px;font-size:10px;color:#46464c;">0</span>
<span class="m" style="left:65.59px;top:282.53px;font-size:10px;color:#8a8a90;">"</span>
<span class="m" style="left:71.57px;top:282.53px;font-size:10px;color:#8a8a90;">&gt;</span>
<span class="m" style="left:77.56px;top:282.53px;font-size:10px;color:#8a8a90;">&lt;/</span>
<span class="m" style="left:89.53px;top:282.53px;font-size:10px;color:#7d7d84;">html:dialog</span>
<span class="m" style="left:155.36px;top:282.53px;font-size:10px;color:#8a8a90;">&gt;</span>
<svg style="left:49.3px;top:301.2px;" width="6" height="8" viewBox="0 0 6 8"><path d="M.3.300L5.300 4 .3 7.700z" fill="#6e6e74"/></svg>
<span class="m" style="left:59.6px;top:298.53px;font-size:10px;color:#8a8a90;">&lt;</span>
<span class="m" style="left:65.59px;top:298.53px;font-size:10px;color:#7d7d84;">html:template</span>
<span class="m" style="left:149.38px;top:298.53px;font-size:10px;color:#9c9ca2;">id</span>
<span class="m" style="left:161.35px;top:298.53px;font-size:10px;color:#8a8a90;">="</span>
<span class="m" style="left:173.32px;top:298.53px;font-size:10px;color:#46464c;">window-modal-dialog-template</span>
<span class="m" style="left:340.9px;top:298.53px;font-size:10px;color:#8a8a90;">"</span>
<span class="m" style="left:346.88px;top:298.53px;font-size:10px;color:#8a8a90;">&gt;</span>
<div style="left:355.06500000000005px;top:300.3px;width:13.2px;height:9.6px;background:#ededf0;border:1px solid #bdbdc4;border-radius:3px;box-sizing:border-box;"></div>
<div style="left:358.1650000000001px;top:304.3px;width:1.7px;height:1.7px;background:#1c1c20;border-radius:.4px;"></div>
<div style="left:360.86500000000007px;top:304.3px;width:1.7px;height:1.7px;background:#1c1c20;border-radius:.4px;"></div>
<div style="left:363.56500000000005px;top:304.3px;width:1.7px;height:1.7px;background:#1c1c20;border-radius:.4px;"></div>
<span class="m" style="left:371.17px;top:298.53px;font-size:10px;color:#8a8a90;">&lt;/</span>
<span class="m" style="left:383.14px;top:298.53px;font-size:10px;color:#7d7d84;">html:template</span>
<span class="m" style="left:460.94px;top:298.53px;font-size:10px;color:#8a8a90;">&gt;</span>
<svg style="left:49.3px;top:317.2px;" width="6" height="8" viewBox="0 0 6 8"><path d="M.3.300L5.300 4 .3 7.700z" fill="#6e6e74"/></svg>
<span class="m" style="left:59.6px;top:314.53px;font-size:10px;color:#38383d;">&lt;</span>
<span class="m" style="left:65.59px;top:314.53px;font-size:10px;color:#0074e8;">box</span>
<span class="m" style="left:83.54px;top:314.53px;font-size:10px;color:#38383d;">&gt;</span>
<div style="left:91.72500000000001px;top:316.3px;width:13.2px;height:9.6px;background:#ededf0;border:1px solid #bdbdc4;border-radius:3px;box-sizing:border-box;"></div>
<div style="left:94.825px;top:320.3px;width:1.7px;height:1.7px;background:#1c1c20;border-radius:.4px;"></div>
<div style="left:97.525px;top:320.3px;width:1.7px;height:1.7px;background:#1c1c20;border-radius:.4px;"></div>
<div style="left:100.22500000000001px;top:320.3px;width:1.7px;height:1.7px;background:#1c1c20;border-radius:.4px;"></div>
<span class="m" style="left:107.83px;top:314.53px;font-size:10px;color:#38383d;">&lt;/</span>
<span class="m" style="left:119.8px;top:314.53px;font-size:10px;color:#0074e8;">box</span>
<span class="m" style="left:137.75px;top:314.53px;font-size:10px;color:#38383d;">&gt;</span>
<svg style="left:49.3px;top:333.2px;" width="6" height="8" viewBox="0 0 6 8"><path d="M.3.300L5.300 4 .3 7.700z" fill="#6e6e74"/></svg>
<span class="m" style="left:59.6px;top:330.53px;font-size:10px;color:#38383d;">&lt;</span>
<span class="m" style="left:65.59px;top:330.53px;font-size:10px;color:#0074e8;">hbox</span>
<span class="m" style="left:95.51px;top:330.53px;font-size:10px;color:#dd00a9;">id</span>
<span class="m" style="left:107.48px;top:330.53px;font-size:10px;color:#38383d;">="</span>
<span class="m" style="left:119.45px;top:330.53px;font-size:10px;color:#003eaa;">browser</span>
<span class="m" style="left:161.34px;top:330.53px;font-size:10px;color:#38383d;">"</span>
<span class="m" style="left:173.32px;top:330.53px;font-size:10px;color:#dd00a9;">flex</span>
<span class="m" style="left:197.26px;top:330.53px;font-size:10px;color:#38383d;">="</span>
<span class="m" style="left:209.23px;top:330.53px;font-size:10px;color:#003eaa;">1</span>
<span class="m" style="left:215.21px;top:330.53px;font-size:10px;color:#38383d;">"</span>
<span class="m" style="left:221.2px;top:330.53px;font-size:10px;color:#38383d;">&gt;</span>
<div style="left:229.38000000000005px;top:332.3px;width:13.2px;height:9.6px;background:#ededf0;border:1px solid #bdbdc4;border-radius:3px;box-sizing:border-box;"></div>
<div style="left:232.48000000000005px;top:336.3px;width:1.7px;height:1.7px;background:#1c1c20;border-radius:.4px;"></div>
<div style="left:235.18000000000006px;top:336.3px;width:1.7px;height:1.7px;background:#1c1c20;border-radius:.4px;"></div>
<div style="left:237.88000000000005px;top:336.3px;width:1.7px;height:1.7px;background:#1c1c20;border-radius:.4px;"></div>
<span class="m" style="left:245.48px;top:330.53px;font-size:10px;color:#38383d;">&lt;/</span>
<span class="m" style="left:257.45px;top:330.53px;font-size:10px;color:#0074e8;">hbox</span>
<span class="m" style="left:281.39px;top:330.53px;font-size:10px;color:#38383d;">&gt;</span>
<svg style="left:49.3px;top:349.2px;" width="6" height="8" viewBox="0 0 6 8"><path d="M.3.300L5.300 4 .3 7.700z" fill="#6e6e74"/></svg>
<span class="m" style="left:59.6px;top:346.53px;font-size:10px;color:#8a8a90;">&lt;</span>
<span class="m" style="left:65.59px;top:346.53px;font-size:10px;color:#7d7d84;">box</span>
<span class="m" style="left:89.53px;top:346.53px;font-size:10px;color:#9c9ca2;">id</span>
<span class="m" style="left:101.5px;top:346.53px;font-size:10px;color:#8a8a90;">="</span>
<span class="m" style="left:113.47px;top:346.53px;font-size:10px;color:#46464c;">customization-container</span>
<span class="m" style="left:251.12px;top:346.53px;font-size:10px;color:#8a8a90;">"</span>
<span class="m" style="left:263.09px;top:346.53px;font-size:10px;color:#9c9ca2;">flex</span>
<span class="m" style="left:287.03px;top:346.53px;font-size:10px;color:#8a8a90;">="</span>
<span class="m" style="left:299.0px;top:346.53px;font-size:10px;color:#46464c;">1</span>
<span class="m" style="left:304.99px;top:346.53px;font-size:10px;color:#8a8a90;">"</span>
<span class="m" style="left:316.96px;top:346.53px;font-size:10px;color:#9c9ca2;">hidden</span>
<span class="m" style="left:352.87px;top:346.53px;font-size:10px;color:#8a8a90;">="</span>
<span class="m" style="left:364.84px;top:346.53px;font-size:10px;color:#46464c;">true</span>
<span class="m" style="left:388.78px;top:346.53px;font-size:10px;color:#8a8a90;">"</span>
<span class="m" style="left:394.76px;top:346.53px;font-size:10px;color:#8a8a90;">&gt;</span>
<div style="left:402.94500000000016px;top:348.3px;width:13.2px;height:9.6px;background:#ededf0;border:1px solid #bdbdc4;border-radius:3px;box-sizing:border-box;"></div>
<div style="left:406.0450000000002px;top:352.3px;width:1.7px;height:1.7px;background:#1c1c20;border-radius:.4px;"></div>
<div style="left:408.7450000000002px;top:352.3px;width:1.7px;height:1.7px;background:#1c1c20;border-radius:.4px;"></div>
<div style="left:411.44500000000016px;top:352.3px;width:1.7px;height:1.7px;background:#1c1c20;border-radius:.4px;"></div>
<span class="m" style="left:419.05px;top:346.53px;font-size:10px;color:#8a8a90;">&lt;/</span>
<span class="m" style="left:431.02px;top:346.53px;font-size:10px;color:#7d7d84;">box</span>
<span class="m" style="left:448.97px;top:346.53px;font-size:10px;color:#8a8a90;">&gt;</span>
<svg style="left:49.3px;top:365.2px;" width="6" height="8" viewBox="0 0 6 8"><path d="M.3.300L5.300 4 .3 7.700z" fill="#6e6e74"/></svg>
<span class="m" style="left:59.6px;top:362.53px;font-size:10px;color:#38383d;">&lt;</span>
<span class="m" style="left:65.59px;top:362.53px;font-size:10px;color:#0074e8;">html:div</span>
<span class="m" style="left:119.45px;top:362.53px;font-size:10px;color:#dd00a9;">id</span>
<span class="m" style="left:131.42px;top:362.53px;font-size:10px;color:#38383d;">="</span>
<span class="m" style="left:143.39px;top:362.53px;font-size:10px;color:#003eaa;">fullscreen-and-pointerlock-wrapper</span>
<span class="m" style="left:346.88px;top:362.53px;font-size:10px;color:#38383d;">"</span>
<span class="m" style="left:352.87px;top:362.53px;font-size:10px;color:#38383d;">&gt;</span>
<div style="left:361.05px;top:364.3px;width:13.2px;height:9.6px;background:#ededf0;border:1px solid #bdbdc4;border-radius:3px;box-sizing:border-box;"></div>
<div style="left:364.15000000000003px;top:368.3px;width:1.7px;height:1.7px;background:#1c1c20;border-radius:.4px;"></div>
<div style="left:366.85px;top:368.3px;width:1.7px;height:1.7px;background:#1c1c20;border-radius:.4px;"></div>
<div style="left:369.55px;top:368.3px;width:1.7px;height:1.7px;background:#1c1c20;border-radius:.4px;"></div>
<span class="m" style="left:377.15px;top:362.53px;font-size:10px;color:#38383d;">&lt;/</span>
<span class="m" style="left:389.12px;top:362.53px;font-size:10px;color:#0074e8;">html:div</span>
<span class="m" style="left:437.0px;top:362.53px;font-size:10px;color:#38383d;">&gt;</span>
<span class="m" style="left:59.6px;top:378.53px;font-size:10px;color:#38383d;">&lt;</span>
<span class="m" style="left:65.59px;top:378.53px;font-size:10px;color:#0074e8;">vbox</span>
<span class="m" style="left:95.51px;top:378.53px;font-size:10px;color:#dd00a9;">id</span>
<span class="m" style="left:107.48px;top:378.53px;font-size:10px;color:#38383d;">="</span>
<span class="m" style="left:119.45px;top:378.53px;font-size:10px;color:#003eaa;">browser-bottombox</span>
<span class="m" style="left:221.19px;top:378.53px;font-size:10px;color:#38383d;">"</span>
<span class="m" style="left:233.17px;top:378.53px;font-size:10px;color:#dd00a9;">layer</span>
<span class="m" style="left:263.09px;top:378.53px;font-size:10px;color:#38383d;">="</span>
<span class="m" style="left:275.06px;top:378.53px;font-size:10px;color:#003eaa;">true</span>
<span class="m" style="left:299.0px;top:378.53px;font-size:10px;color:#38383d;">"</span>
<span class="m" style="left:304.99px;top:378.53px;font-size:10px;color:#38383d;">&gt;</span>
<span class="m" style="left:310.97px;top:378.53px;font-size:10px;color:#38383d;">&lt;/</span>
<span class="m" style="left:322.94px;top:378.53px;font-size:10px;color:#0074e8;">vbox</span>
<span class="m" style="left:346.88px;top:378.53px;font-size:10px;color:#38383d;">&gt;</span>
<span class="m" style="left:59.6px;top:394.53px;font-size:10px;color:#38383d;">&lt;</span>
<span class="m" style="left:65.59px;top:394.53px;font-size:10px;color:#0074e8;">html:div</span>
<span class="m" style="left:119.45px;top:394.53px;font-size:10px;color:#dd00a9;">id</span>
<span class="m" style="left:131.42px;top:394.53px;font-size:10px;color:#38383d;">="</span>
<span class="m" style="left:143.39px;top:394.53px;font-size:10px;color:#003eaa;">a11y-announcement</span>
<span class="m" style="left:245.14px;top:394.53px;font-size:10px;color:#38383d;">"</span>
<span class="m" style="left:257.11px;top:394.53px;font-size:10px;color:#dd00a9;">role</span>
<span class="m" style="left:281.05px;top:394.53px;font-size:10px;color:#38383d;">="</span>
<span class="m" style="left:293.02px;top:394.53px;font-size:10px;color:#003eaa;">alert</span>
<span class="m" style="left:322.94px;top:394.53px;font-size:10px;color:#38383d;">"</span>
<span class="m" style="left:328.93px;top:394.53px;font-size:10px;color:#38383d;">&gt;</span>
<span class="m" style="left:334.91px;top:394.53px;font-size:10px;color:#38383d;">&lt;/</span>
<span class="m" style="left:346.88px;top:394.53px;font-size:10px;color:#0074e8;">html:div</span>
<span class="m" style="left:394.76px;top:394.53px;font-size:10px;color:#38383d;">&gt;</span>
<span class="m" style="left:59.6px;top:410.53px;font-size:10px;color:#8a8a90;">&lt;</span>
<span class="m" style="left:65.59px;top:410.53px;font-size:10px;color:#7d7d84;">html:div</span>
<span class="m" style="left:119.45px;top:410.53px;font-size:10px;color:#9c9ca2;">id</span>
<span class="m" style="left:131.42px;top:410.53px;font-size:10px;color:#8a8a90;">="</span>
<span class="m" style="left:143.39px;top:410.53px;font-size:10px;color:#46464c;">fullscr-toggler</span>
<span class="m" style="left:233.17px;top:410.53px;font-size:10px;color:#8a8a90;">"</span>
<span class="m" style="left:245.14px;top:410.53px;font-size:10px;color:#9c9ca2;">hidden</span>
<span class="m" style="left:281.05px;top:410.53px;font-size:10px;color:#8a8a90;">="</span>
<span class="m" style="left:293.02px;top:410.53px;font-size:10px;color:#46464c;">hidden</span>
<span class="m" style="left:328.93px;top:410.53px;font-size:10px;color:#8a8a90;">"</span>
<span class="m" style="left:334.91px;top:410.53px;font-size:10px;color:#8a8a90;">&gt;</span>
<span class="m" style="left:340.9px;top:410.53px;font-size:10px;color:#8a8a90;">&lt;/</span>
<span class="m" style="left:352.87px;top:410.53px;font-size:10px;color:#7d7d84;">html:div</span>
<span class="m" style="left:400.75px;top:410.53px;font-size:10px;color:#8a8a90;">&gt;</span>
<span class="m" style="left:48.6px;top:426.53px;font-size:10px;color:#38383d;">&lt;/</span>
<span class="m" style="left:60.57px;top:426.53px;font-size:10px;color:#0074e8;">html:body</span>
<span class="m" style="left:114.44px;top:426.53px;font-size:10px;color:#38383d;">&gt;</span>
<svg style="left:38.3px;top:445.2px;" width="6" height="8" viewBox="0 0 6 8"><path d="M.3.300L5.300 4 .3 7.700z" fill="#6e6e74"/></svg>
<span class="m" style="left:48.6px;top:442.53px;font-size:10px;color:#8a8a90;">&lt;</span>
<span class="m" style="left:54.59px;top:442.53px;font-size:10px;color:#7d7d84;">keyset</span>
<span class="m" style="left:96.48px;top:442.53px;font-size:10px;color:#9c9ca2;">id</span>
<span class="m" style="left:108.45px;top:442.53px;font-size:10px;color:#8a8a90;">="</span>
<span class="m" style="left:120.42px;top:442.53px;font-size:10px;color:#46464c;">ext-keyset-id-emoji_saveriomorelli_com</span>
<span class="m" style="left:347.85px;top:442.53px;font-size:10px;color:#8a8a90;">"</span>
<span class="m" style="left:353.84px;top:442.53px;font-size:10px;color:#8a8a90;">&gt;</span>
<div style="left:362.02000000000004px;top:444.3px;width:13.2px;height:9.6px;background:#ededf0;border:1px solid #bdbdc4;border-radius:3px;box-sizing:border-box;"></div>
<div style="left:365.12000000000006px;top:448.3px;width:1.7px;height:1.7px;background:#1c1c20;border-radius:.4px;"></div>
<div style="left:367.82000000000005px;top:448.3px;width:1.7px;height:1.7px;background:#1c1c20;border-radius:.4px;"></div>
<div style="left:370.52000000000004px;top:448.3px;width:1.7px;height:1.7px;background:#1c1c20;border-radius:.4px;"></div>
<span class="m" style="left:378.12px;top:442.53px;font-size:10px;color:#8a8a90;">&lt;/</span>
<span class="m" style="left:390.09px;top:442.53px;font-size:10px;color:#7d7d84;">keyset</span>
<span class="m" style="left:426.0px;top:442.53px;font-size:10px;color:#8a8a90;">&gt;</span>
<svg style="left:38.3px;top:461.2px;" width="6" height="8" viewBox="0 0 6 8"><path d="M.3.300L5.300 4 .3 7.700z" fill="#6e6e74"/></svg>
<span class="m" style="left:48.6px;top:458.53px;font-size:10px;color:#8a8a90;">&lt;</span>
<span class="m" style="left:54.59px;top:458.53px;font-size:10px;color:#7d7d84;">keyset</span>
<span class="m" style="left:96.48px;top:458.53px;font-size:10px;color:#9c9ca2;">id</span>
<span class="m" style="left:108.45px;top:458.53px;font-size:10px;color:#8a8a90;">="</span>
<span class="m" style="left:120.42px;top:458.53px;font-size:10px;color:#46464c;">ext-keyset-id-opentabsnexttocurrent_sblask</span>
<span class="m" style="left:371.79px;top:458.53px;font-size:10px;color:#8a8a90;">"</span>
<span class="m" style="left:377.78px;top:458.53px;font-size:10px;color:#8a8a90;">&gt;</span>
<div style="left:385.96000000000004px;top:460.3px;width:13.2px;height:9.6px;background:#ededf0;border:1px solid #bdbdc4;border-radius:3px;box-sizing:border-box;"></div>
<div style="left:389.06000000000006px;top:464.3px;width:1.7px;height:1.7px;background:#1c1c20;border-radius:.4px;"></div>
<div style="left:391.76000000000005px;top:464.3px;width:1.7px;height:1.7px;background:#1c1c20;border-radius:.4px;"></div>
<div style="left:394.46000000000004px;top:464.3px;width:1.7px;height:1.7px;background:#1c1c20;border-radius:.4px;"></div>
<span class="m" style="left:402.06px;top:458.53px;font-size:10px;color:#8a8a90;">&lt;/</span>
<span class="m" style="left:414.03px;top:458.53px;font-size:10px;color:#7d7d84;">keyset</span>
<span class="m" style="left:449.94px;top:458.53px;font-size:10px;color:#8a8a90;">&gt;</span>
<svg style="left:38.3px;top:477.2px;" width="6" height="8" viewBox="0 0 6 8"><path d="M.3.300L5.300 4 .3 7.700z" fill="#6e6e74"/></svg>
<span class="m" style="left:48.6px;top:474.53px;font-size:10px;color:#8a8a90;">&lt;</span>
<span class="m" style="left:54.59px;top:474.53px;font-size:10px;color:#7d7d84;">keyset</span>
<span class="m" style="left:96.48px;top:474.53px;font-size:10px;color:#9c9ca2;">id</span>
<span class="m" style="left:108.45px;top:474.53px;font-size:10px;color:#8a8a90;">="</span>
<span class="m" style="left:120.42px;top:474.53px;font-size:10px;color:#46464c;">ext-keyset-id-screenshots_mozilla_org</span>
<span class="m" style="left:341.87px;top:474.53px;font-size:10px;color:#8a8a90;">"</span>
<span class="m" style="left:347.85px;top:474.53px;font-size:10px;color:#8a8a90;">&gt;</span>
<div style="left:356.035px;top:476.3px;width:13.2px;height:9.6px;background:#ededf0;border:1px solid #bdbdc4;border-radius:3px;box-sizing:border-box;"></div>
<div style="left:359.13500000000005px;top:480.3px;width:1.7px;height:1.7px;background:#1c1c20;border-radius:.4px;"></div>
<div style="left:361.83500000000004px;top:480.3px;width:1.7px;height:1.7px;background:#1c1c20;border-radius:.4px;"></div>
<div style="left:364.535px;top:480.3px;width:1.7px;height:1.7px;background:#1c1c20;border-radius:.4px;"></div>
<span class="m" style="left:372.14px;top:474.53px;font-size:10px;color:#8a8a90;">&lt;/</span>
<span class="m" style="left:384.11px;top:474.53px;font-size:10px;color:#7d7d84;">keyset</span>
<span class="m" style="left:420.02px;top:474.53px;font-size:10px;color:#8a8a90;">&gt;</span>
<svg style="left:38.3px;top:493.2px;" width="6" height="8" viewBox="0 0 6 8"><path d="M.3.300L5.300 4 .3 7.700z" fill="#6e6e74"/></svg>
<span class="m" style="left:48.6px;top:490.53px;font-size:10px;color:#8a8a90;">&lt;</span>
<span class="m" style="left:54.59px;top:490.53px;font-size:10px;color:#7d7d84;">keyset</span>
<span class="m" style="left:96.48px;top:490.53px;font-size:10px;color:#9c9ca2;">id</span>
<span class="m" style="left:108.45px;top:490.53px;font-size:10px;color:#8a8a90;">="</span>
<span class="m" style="left:120.42px;top:490.53px;font-size:10px;color:#46464c;">ext-keyset-id-tab-session-manager_sienori</span>
<span class="m" style="left:365.81px;top:490.53px;font-size:10px;color:#8a8a90;">"</span>
<span class="m" style="left:371.79px;top:490.53px;font-size:10px;color:#8a8a90;">&gt;</span>
<div style="left:379.975px;top:492.3px;width:13.2px;height:9.6px;background:#ededf0;border:1px solid #bdbdc4;border-radius:3px;box-sizing:border-box;"></div>
<div style="left:383.07500000000005px;top:496.3px;width:1.7px;height:1.7px;background:#1c1c20;border-radius:.4px;"></div>
<div style="left:385.77500000000003px;top:496.3px;width:1.7px;height:1.7px;background:#1c1c20;border-radius:.4px;"></div>
<div style="left:388.475px;top:496.3px;width:1.7px;height:1.7px;background:#1c1c20;border-radius:.4px;"></div>
<span class="m" style="left:396.08px;top:490.53px;font-size:10px;color:#8a8a90;">&lt;/</span>
<span class="m" style="left:408.05px;top:490.53px;font-size:10px;color:#7d7d84;">keyset</span>
<span class="m" style="left:443.96px;top:490.53px;font-size:10px;color:#8a8a90;">&gt;</span>
<svg style="left:38.3px;top:509.20000000000005px;" width="6" height="8" viewBox="0 0 6 8"><path d="M.3.300L5.300 4 .3 7.700z" fill="#6e6e74"/></svg>
<span class="m" style="left:48.6px;top:506.54px;font-size:10px;color:#8a8a90;">&lt;</span>
<span class="m" style="left:54.59px;top:506.54px;font-size:10px;color:#7d7d84;">keyset</span>
<span class="m" style="left:96.48px;top:506.54px;font-size:10px;color:#9c9ca2;">id</span>
<span class="m" style="left:108.45px;top:506.54px;font-size:10px;color:#8a8a90;">="</span>
<span class="m" style="left:120.42px;top:506.54px;font-size:10px;color:#46464c;">ext-keyset-id-extension_one-tab_com</span>
<span class="m" style="left:329.9px;top:506.54px;font-size:10px;color:#8a8a90;">"</span>
<span class="m" style="left:335.88px;top:506.54px;font-size:10px;color:#8a8a90;">&gt;</span>
<div style="left:344.06500000000005px;top:508.30000000000007px;width:13.2px;height:9.6px;background:#ededf0;border:1px solid #bdbdc4;border-radius:3px;box-sizing:border-box;"></div>
<div style="left:347.1650000000001px;top:512.3000000000001px;width:1.7px;height:1.7px;background:#1c1c20;border-radius:.4px;"></div>
<div style="left:349.86500000000007px;top:512.3000000000001px;width:1.7px;height:1.7px;background:#1c1c20;border-radius:.4px;"></div>
<div style="left:352.56500000000005px;top:512.3000000000001px;width:1.7px;height:1.7px;background:#1c1c20;border-radius:.4px;"></div>
<span class="m" style="left:360.17px;top:506.54px;font-size:10px;color:#8a8a90;">&lt;/</span>
<span class="m" style="left:372.14px;top:506.54px;font-size:10px;color:#7d7d84;">keyset</span>
<span class="m" style="left:408.05px;top:506.54px;font-size:10px;color:#8a8a90;">&gt;</span>
<svg style="left:38.3px;top:525.2px;" width="6" height="8" viewBox="0 0 6 8"><path d="M.3.300L5.300 4 .3 7.700z" fill="#6e6e74"/></svg>
<span class="m" style="left:48.6px;top:522.54px;font-size:10px;color:#8a8a90;">&lt;</span>
<span class="m" style="left:54.59px;top:522.54px;font-size:10px;color:#7d7d84;">keyset</span>
<span class="m" style="left:96.48px;top:522.54px;font-size:10px;color:#9c9ca2;">id</span>
<span class="m" style="left:108.45px;top:522.54px;font-size:10px;color:#8a8a90;">="</span>
<span class="m" style="left:120.42px;top:522.54px;font-size:10px;color:#46464c;">ext-keyset-id-jid1-93wyvpgvxzgatw_jetpack</span>
<span class="m" style="left:365.81px;top:522.54px;font-size:10px;color:#8a8a90;">"</span>
<span class="m" style="left:371.79px;top:522.54px;font-size:10px;color:#8a8a90;">&gt;</span>
<div style="left:379.975px;top:524.3000000000001px;width:13.2px;height:9.6px;background:#ededf0;border:1px solid #bdbdc4;border-radius:3px;box-sizing:border-box;"></div>
<div style="left:383.07500000000005px;top:528.3000000000001px;width:1.7px;height:1.7px;background:#1c1c20;border-radius:.4px;"></div>
<div style="left:385.77500000000003px;top:528.3000000000001px;width:1.7px;height:1.7px;background:#1c1c20;border-radius:.4px;"></div>
<div style="left:388.475px;top:528.3000000000001px;width:1.7px;height:1.7px;background:#1c1c20;border-radius:.4px;"></div>
<span class="m" style="left:396.08px;top:522.54px;font-size:10px;color:#8a8a90;">&lt;/</span>
<span class="m" style="left:408.05px;top:522.54px;font-size:10px;color:#7d7d84;">keyset</span>
<span class="m" style="left:443.96px;top:522.54px;font-size:10px;color:#8a8a90;">&gt;</span>
<svg style="left:38.3px;top:541.2px;" width="6" height="8" viewBox="0 0 6 8"><path d="M.3.300L5.300 4 .3 7.700z" fill="#6e6e74"/></svg>
<span class="m" style="left:48.6px;top:538.54px;font-size:10px;color:#8a8a90;">&lt;</span>
<span class="m" style="left:54.59px;top:538.54px;font-size:10px;color:#7d7d84;">keyset</span>
<span class="m" style="left:96.48px;top:538.54px;font-size:10px;color:#9c9ca2;">id</span>
<span class="m" style="left:108.45px;top:538.54px;font-size:10px;color:#8a8a90;">="</span>
<span class="m" style="left:120.42px;top:538.54px;font-size:10px;color:#46464c;">ext-keyset-id-tabhunter_ericpromislow_com</span>
<span class="m" style="left:365.81px;top:538.54px;font-size:10px;color:#8a8a90;">"</span>
<span class="m" style="left:371.79px;top:538.54px;font-size:10px;color:#8a8a90;">&gt;</span>
<div style="left:379.975px;top:540.3000000000001px;width:13.2px;height:9.6px;background:#ededf0;border:1px solid #bdbdc4;border-radius:3px;box-sizing:border-box;"></div>
<div style="left:383.07500000000005px;top:544.3000000000001px;width:1.7px;height:1.7px;background:#1c1c20;border-radius:.4px;"></div>
<div style="left:385.77500000000003px;top:544.3000000000001px;width:1.7px;height:1.7px;background:#1c1c20;border-radius:.4px;"></div>
<div style="left:388.475px;top:544.3000000000001px;width:1.7px;height:1.7px;background:#1c1c20;border-radius:.4px;"></div>
<span class="m" style="left:396.08px;top:538.54px;font-size:10px;color:#8a8a90;">&lt;/</span>
<span class="m" style="left:408.05px;top:538.54px;font-size:10px;color:#7d7d84;">keyset</span>
<span class="m" style="left:443.96px;top:538.54px;font-size:10px;color:#8a8a90;">&gt;</span>
<span class="m" style="left:48.6px;top:554.54px;font-size:10px;color:#8a8a90;">&lt;</span>
<span class="m" style="left:54.59px;top:554.54px;font-size:10px;color:#7d7d84;">keyset</span>
<span class="m" style="left:96.48px;top:554.54px;font-size:10px;color:#9c9ca2;">id</span>
<span class="m" style="left:108.45px;top:554.54px;font-size:10px;color:#8a8a90;">="</span>
<span class="m" style="left:120.42px;top:554.54px;font-size:10px;color:#46464c;">ext-keyset-id-ublock0_raymondhill_net</span>
<span class="m" style="left:341.87px;top:554.54px;font-size:10px;color:#8a8a90;">"</span>
<span class="m" style="left:347.85px;top:554.54px;font-size:10px;color:#8a8a90;">&gt;</span>
<span class="m" style="left:353.84px;top:554.54px;font-size:10px;color:#8a8a90;">&lt;/</span>
<span class="m" style="left:365.81px;top:554.54px;font-size:10px;color:#7d7d84;">keyset</span>
<span class="m" style="left:401.72px;top:554.54px;font-size:10px;color:#8a8a90;">&gt;</span>
<svg style="left:38.3px;top:573.2px;" width="6" height="8" viewBox="0 0 6 8"><path d="M.3.300L5.300 4 .3 7.700z" fill="#6e6e74"/></svg>
<span class="m" style="left:48.6px;top:570.54px;font-size:10px;color:#8a8a90;">&lt;</span>
<span class="m" style="left:54.59px;top:570.54px;font-size:10px;color:#7d7d84;">keyset</span>
<span class="m" style="left:96.48px;top:570.54px;font-size:10px;color:#9c9ca2;">id</span>
<span class="m" style="left:108.45px;top:570.54px;font-size:10px;color:#8a8a90;">="</span>
<span class="m" style="left:120.42px;top:570.54px;font-size:10px;color:#46464c;">ext-keyset-id-_b9db16a4-6edc-47ec-a1f4-b86292ed211d_</span>
<span class="m" style="left:431.64px;top:570.54px;font-size:10px;color:#8a8a90;">"</span>
<span class="m" style="left:437.63px;top:570.54px;font-size:10px;color:#8a8a90;">&gt;</span>
<div style="left:445.81000000000006px;top:572.3000000000001px;width:13.2px;height:9.6px;background:#ededf0;border:1px solid #bdbdc4;border-radius:3px;box-sizing:border-box;"></div>
<div style="left:448.9100000000001px;top:576.3000000000001px;width:1.7px;height:1.7px;background:#1c1c20;border-radius:.4px;"></div>
<div style="left:451.61000000000007px;top:576.3000000000001px;width:1.7px;height:1.7px;background:#1c1c20;border-radius:.4px;"></div>
<div style="left:454.31000000000006px;top:576.3000000000001px;width:1.7px;height:1.7px;background:#1c1c20;border-radius:.4px;"></div>
<span class="m" style="left:461.91px;top:570.54px;font-size:10px;color:#8a8a90;">&lt;/</span>
<span class="m" style="left:473.88px;top:570.54px;font-size:10px;color:#7d7d84;">keyset</span>
<span class="m" style="left:509.79px;top:570.54px;font-size:10px;color:#8a8a90;">&gt;</span>
<svg style="left:38.3px;top:589.2px;" width="6" height="8" viewBox="0 0 6 8"><path d="M.3.300L5.300 4 .3 7.700z" fill="#6e6e74"/></svg>
<span class="m" style="left:48.6px;top:586.54px;font-size:10px;color:#38383d;">&lt;</span>
<span class="m" style="left:54.59px;top:586.54px;font-size:10px;color:#0074e8;">iframe</span>
<span class="m" style="left:96.48px;top:586.54px;font-size:10px;color:#dd00a9;">class</span>
<span class="m" style="left:126.41px;top:586.54px;font-size:10px;color:#38383d;">="</span>
<span class="m" style="left:138.38px;top:586.54px;font-size:10px;color:#003eaa;">devtools-highlighter-renderer</span>
<span class="m" style="left:311.94px;top:586.54px;font-size:10px;color:#38383d;">"</span>
<span class="m" style="left:323.91px;top:586.54px;font-size:10px;color:#dd00a9;">data-number-of-highlighters</span>
<span class="m" style="left:485.5px;top:586.54px;font-size:10px;color:#38383d;">="</span>
<span class="m" style="left:497.48px;top:586.54px;font-size:10px;color:#003eaa;">1</span>
<span class="m" style="left:503.46px;top:586.54px;font-size:10px;color:#38383d;">"</span>
<span class="m" style="left:509.45px;top:586.54px;font-size:10px;color:#38383d;">&gt;</span>
<div style="left:517.6300000000001px;top:588.3000000000001px;width:13.2px;height:9.6px;background:#ededf0;border:1px solid #bdbdc4;border-radius:3px;box-sizing:border-box;"></div>
<div style="left:520.7300000000001px;top:592.3000000000001px;width:1.7px;height:1.7px;background:#1c1c20;border-radius:.4px;"></div>
<div style="left:523.4300000000001px;top:592.3000000000001px;width:1.7px;height:1.7px;background:#1c1c20;border-radius:.4px;"></div>
<div style="left:526.1300000000001px;top:592.3000000000001px;width:1.7px;height:1.7px;background:#1c1c20;border-radius:.4px;"></div>
<span class="m" style="left:48.6px;top:600.54px;font-size:10px;color:#38383d;">&lt;/</span>
<span class="m" style="left:60.57px;top:600.54px;font-size:10px;color:#0074e8;">iframe</span>
<span class="m" style="left:96.48px;top:600.54px;font-size:10px;color:#38383d;">&gt;</span>
<span class="m" style="left:48.6px;top:616.54px;font-size:10px;color:#8a8a90;">&lt;</span>
<span class="m" style="left:54.59px;top:616.54px;font-size:10px;color:#7d7d84;">div</span>
<span class="m" style="left:78.53px;top:616.54px;font-size:10px;color:#9c9ca2;">class</span>
<span class="m" style="left:108.45px;top:616.54px;font-size:10px;color:#8a8a90;">="</span>
<span class="m" style="left:120.42px;top:616.54px;font-size:10px;color:#46464c;">moz-custom-content-container</span>
<span class="m" style="left:288.0px;top:616.54px;font-size:10px;color:#8a8a90;">"</span>
<span class="m" style="left:299.97px;top:616.54px;font-size:10px;color:#9c9ca2;">role</span>
<span class="m" style="left:323.91px;top:616.54px;font-size:10px;color:#8a8a90;">="</span>
<span class="m" style="left:335.88px;top:616.54px;font-size:10px;color:#46464c;">presentation</span>
<span class="m" style="left:407.7px;top:616.54px;font-size:10px;color:#8a8a90;">"</span>
<span class="m" style="left:419.67px;top:616.54px;font-size:10px;color:#9c9ca2;">hidden</span>
<span class="m" style="left:455.58px;top:616.54px;font-size:10px;color:#8a8a90;">="</span>
<span class="m" style="left:467.55px;top:616.54px;font-size:10px;color:#46464c;">true</span>
<span class="m" style="left:491.49px;top:616.54px;font-size:10px;color:#8a8a90;">"</span>
<span class="m" style="left:497.48px;top:616.54px;font-size:10px;color:#8a8a90;">&gt;</span>
<span class="m" style="left:503.46px;top:616.54px;font-size:10px;color:#8a8a90;">&lt;/</span>
<span class="m" style="left:515.43px;top:616.54px;font-size:10px;color:#7d7d84;">div</span>
<span class="m" style="left:533.39px;top:616.54px;font-size:10px;color:#8a8a90;">&gt;</span>
<span class="m" style="left:48.6px;top:632.54px;font-size:10px;color:#38383d;">&lt;</span>
<span class="m" style="left:54.59px;top:632.54px;font-size:10px;color:#0074e8;">popupgroup</span>
<span class="m" style="left:114.44px;top:632.54px;font-size:10px;color:#38383d;">&gt;</span>
<span class="m" style="left:120.42px;top:632.54px;font-size:10px;color:#38383d;">&lt;/</span>
<span class="m" style="left:132.39px;top:632.54px;font-size:10px;color:#0074e8;">popupgroup</span>
<span class="m" style="left:192.24px;top:632.54px;font-size:10px;color:#38383d;">&gt;</span>
<svg style="left:38.3px;top:651.2px;" width="6" height="8" viewBox="0 0 6 8"><path d="M.3.300L5.300 4 .3 7.700z" fill="#6e6e74"/></svg>
<span class="m" style="left:48.6px;top:648.54px;font-size:10px;color:#38383d;">&lt;</span>
<span class="m" style="left:54.59px;top:648.54px;font-size:10px;color:#0074e8;">tooltip</span>
<span class="m" style="left:102.47px;top:648.54px;font-size:10px;color:#dd00a9;">default</span>
<span class="m" style="left:144.36px;top:648.54px;font-size:10px;color:#38383d;">="</span>
<span class="m" style="left:156.33px;top:648.54px;font-size:10px;color:#003eaa;">true</span>
<span class="m" style="left:180.27px;top:648.54px;font-size:10px;color:#38383d;">"</span>
<span class="m" style="left:192.24px;top:648.54px;font-size:10px;color:#dd00a9;">page</span>
<span class="m" style="left:216.18px;top:648.54px;font-size:10px;color:#38383d;">="</span>
<span class="m" style="left:228.15px;top:648.54px;font-size:10px;color:#003eaa;">true</span>
<span class="m" style="left:252.09px;top:648.54px;font-size:10px;color:#38383d;">"</span>
<span class="m" style="left:264.06px;top:648.54px;font-size:10px;color:#dd00a9;">hasbeenopened</span>
<span class="m" style="left:341.87px;top:648.54px;font-size:10px;color:#38383d;">="</span>
<span class="m" style="left:353.84px;top:648.54px;font-size:10px;color:#003eaa;">true</span>
<span class="m" style="left:377.78px;top:648.54px;font-size:10px;color:#38383d;">"</span>
<span class="m" style="left:383.76px;top:648.54px;font-size:10px;color:#38383d;">&gt;</span>
<div style="left:391.9450000000001px;top:650.3000000000001px;width:13.2px;height:9.6px;background:#ededf0;border:1px solid #bdbdc4;border-radius:3px;box-sizing:border-box;"></div>
<div style="left:395.04500000000013px;top:654.3000000000001px;width:1.7px;height:1.7px;background:#1c1c20;border-radius:.4px;"></div>
<div style="left:397.7450000000001px;top:654.3000000000001px;width:1.7px;height:1.7px;background:#1c1c20;border-radius:.4px;"></div>
<div style="left:400.4450000000001px;top:654.3000000000001px;width:1.7px;height:1.7px;background:#1c1c20;border-radius:.4px;"></div>
<span class="m" style="left:408.05px;top:648.54px;font-size:10px;color:#38383d;">&lt;/</span>
<span class="m" style="left:420.02px;top:648.54px;font-size:10px;color:#0074e8;">tooltip</span>
<span class="m" style="left:461.91px;top:648.54px;font-size:10px;color:#38383d;">&gt;</span>
<span class="m" style="left:37.6px;top:664.54px;font-size:10px;color:#38383d;">&lt;/</span>
<span class="m" style="left:49.57px;top:664.54px;font-size:10px;color:#0074e8;">html</span>
<span class="m" style="left:73.51px;top:664.54px;font-size:10px;color:#38383d;">&gt;</span>
<div style="left:113px;top:263px;width:1px;height:2px;background:#9a9aa0;"></div>
<div style="left:182px;top:263px;width:1px;height:2px;background:#77777c;"></div>
<div style="left:184.5px;top:263px;width:1px;height:2px;background:#77777c;"></div>
<div style="left:294px;top:263px;width:12px;height:2px;background:#d8d8dc;"></div>
<div style="left:366px;top:263px;width:1px;height:2px;background:#9a9aa0;"></div>
</div>
<div class="L">
<div style="left:202px;top:1px;width:75px;height:19px;background:#5040ff;"></div>
<div style="left:202px;top:20px;width:268px;height:128px;background:#0000ff;border-radius:0 4px 4px 4px;box-shadow:2px 2px 3px rgba(0,0,0,.6);"></div>
<div style="left:202px;top:54px;width:268px;height:30px;background:#3939fb;"></div>
<span style="left:208.1px;top:3.04px;font-size:12px;color:#fff;letter-spacing:-0.489px;">Lesezeichen</span>
<div style="left:208.3px;top:17px;width:6px;height:1px;background:#fff;"></div>
<svg style="left:208px;top:32px;" width="17" height="16" viewBox="0 0 17 16"><rect x=".5" y="1.500" width="13" height="10.500" fill="#e9eef5" stroke="#6a7f9a" stroke-width=".8"/><rect x=".5" y="1.500" width="13" height="2.600" fill="#3f7ad6"/><path d="M1 6.500h12M1 9h12M4.800 4.100v7.900M9.200 4.100v7.900" stroke="#9fb0c6" stroke-width=".7"/><path d="M11.500 6.500l1.500 3.100 3.400.400-2.500 2.300.700 3.400-3.100-1.700-3.100 1.700.700-3.400-2.500-2.300 3.400-.400z" fill="#ffcb2e" stroke="#e09a00" stroke-width=".6"/></svg>
<span style="left:230.3px;top:31.64px;font-size:12px;color:#fff;letter-spacing:-0.304px;">Lesezeichen verwalten</span>
<span style="left:358.3px;top:31.64px;font-size:12px;color:#fff;letter-spacing:-0.027px;">Strg+Umschalt+O</span>
<div style="left:205px;top:62px;width:15px;height:15px;background:#e81d26;"></div>
<svg style="left:205px;top:62px;" width="15" height="15" viewBox="0 0 20 20"><path d="M.8 10L9.800.3h3.900L7.300 7.700H19.500v4.700H7.300l6.400 7.300H9.800z" fill="#fff"/></svg>
<span style="left:227.3px;top:62.44px;font-size:12px;color:#fff;letter-spacing:-0.126px;">Lesezeichen von HTML importieren...</span>
<div style="left:205px;top:92px;width:15px;height:15px;background:#e81d26;"></div>
<svg style="left:205px;top:92px;" width="15" height="15" viewBox="0 0 20 20"><path d="M19.200 10L10.200.3H6.300l6.400 7.400H.5v4.700h12.200l-6.400 7.300h3.900z" fill="#fff"/></svg>
<span style="left:227.3px;top:92.44px;font-size:12px;color:#fff;letter-spacing:-0.199px;">Lesezeichen nach HTML exportieren...</span>
<svg style="left:214px;top:123px;" width="16" height="13.5" viewBox="0 0 16 13.5"><defs><linearGradient id="fg2" x1="0" y1="0" x2="0" y2="1"><stop offset="0" stop-color="#ffe29a"/><stop offset="1" stop-color="#f59c1d"/></linearGradient></defs><path d="M.5.500h4.300l1 1.800h9.200v10.200h-14.500z" fill="#ffd98a" stroke="#c9801c" stroke-width=".9"/><rect x=".9" y="3.600" width="13.700" height="8.500" fill="url(#fg2)"/></svg>
<span style="left:238.3px;top:122.44px;font-size:12px;color:#fff;letter-spacing:-0.183px;">Lesezeichen-Symbolleiste</span>
<svg style="left:446.4px;top:123px;" width="7" height="12" viewBox="0 0 7 12"><path d="M.6.600L6.200 6 .6 11.400" stroke="#fff" stroke-width="1.200" fill="none"/></svg>
</div>
<div class="L">
<div style="left:0px;top:722px;width:1174px;height:3px;background:#cfcfcf;"></div>
<div style="left:0px;top:722px;width:97px;height:3px;background:#000;"></div>
<div style="left:97px;top:722px;width:48px;height:3px;background:#2a2a2a;"></div>
<div style="left:107px;top:722px;width:14px;height:3px;background:#5a5a5a;"></div>
</div>
</body></html>
